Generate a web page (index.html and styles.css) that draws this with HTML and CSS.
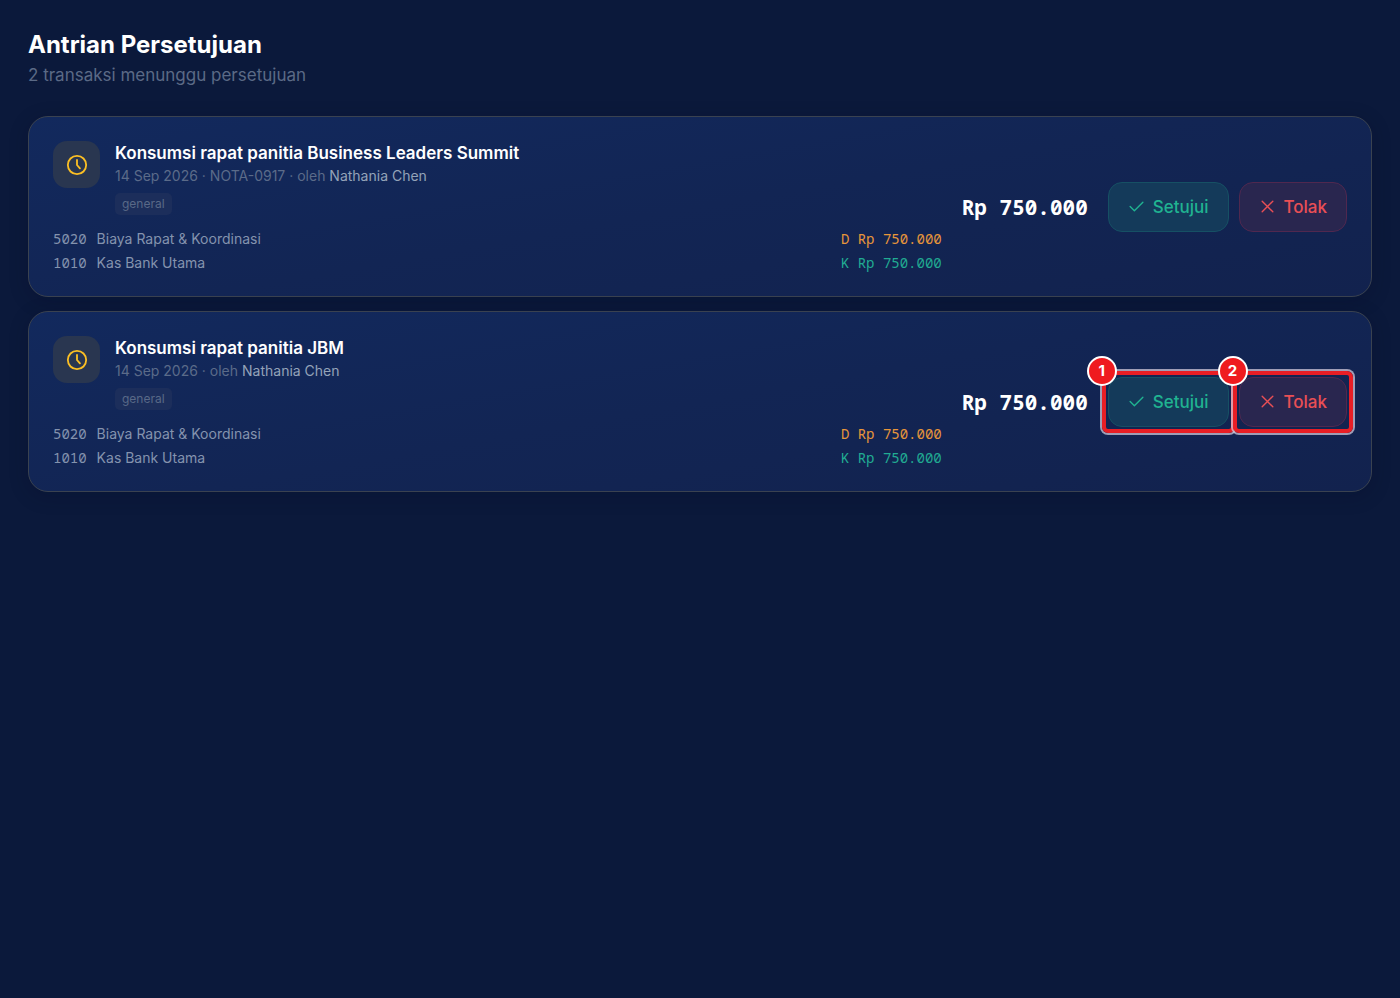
FILE: index.html
```html
<!DOCTYPE html>
<html lang="id">
<head>
<meta charset="utf-8">
<meta name="viewport" content="width=device-width, initial-scale=1">
<title>Antrian Persetujuan</title>
<link rel="stylesheet" href="styles.css">
</head>
<body>
<svg class="sprite" aria-hidden="true">
  <symbol id="clock" viewBox="0 0 24 24"><circle cx="12" cy="12" r="10"/><path d="M12 6.5V12l3.2 3.6"/></symbol>
  <symbol id="check" viewBox="0 0 16 16"><path d="M2 8l4 4 8-8"/></symbol>
  <symbol id="cross" viewBox="0 0 16 16"><path d="M3 3l10 10M13 3L3 13"/></symbol>
</svg>
<main class="page">
  <header class="page-header">
    <h1 class="page-title">Antrian Persetujuan</h1>
    <p class="page-subtitle">2 transaksi menunggu persetujuan</p>
  </header>

  <article class="card">
    <div class="details">
      <div class="summary">
        <span class="badge-icon"><svg><use href="#clock"/></svg></span>
        <div class="summary-text">
          <h2 class="card-title">Konsumsi rapat panitia Business Leaders Summit</h2>
          <p class="meta">14 Sep 2026 · NOTA-0917 · oleh <span class="author">Nathania Chen</span></p>
          <span class="tag">general</span>
        </div>
      </div>
      <ul class="entries">
        <li class="entry"><span class="code">5020</span><span>Biaya Rapat &amp; Koordinasi</span><span class="value debit">D Rp 750.000</span></li>
        <li class="entry"><span class="code">1010</span><span>Kas Bank Utama</span><span class="value credit">K Rp 750.000</span></li>
      </ul>
    </div>
    <strong class="amount">Rp 750.000</strong>
    <div class="actions">
      <div class="action"><button class="btn approve" type="button"><svg><use href="#check"/></svg>Setujui</button></div>
      <div class="action"><button class="btn reject" type="button"><svg><use href="#cross"/></svg>Tolak</button></div>
    </div>
  </article>

  <article class="card">
    <div class="details">
      <div class="summary">
        <span class="badge-icon"><svg><use href="#clock"/></svg></span>
        <div class="summary-text">
          <h2 class="card-title">Konsumsi rapat panitia JBM</h2>
          <p class="meta">14 Sep 2026 · oleh <span class="author">Nathania Chen</span></p>
          <span class="tag">general</span>
        </div>
      </div>
      <ul class="entries">
        <li class="entry"><span class="code">5020</span><span>Biaya Rapat &amp; Koordinasi</span><span class="value debit">D Rp 750.000</span></li>
        <li class="entry"><span class="code">1010</span><span>Kas Bank Utama</span><span class="value credit">K Rp 750.000</span></li>
      </ul>
    </div>
    <strong class="amount">Rp 750.000</strong>
    <div class="actions">
      <div class="action"><button class="btn approve" type="button"><svg><use href="#check"/></svg>Setujui</button><span class="marker"></span><span class="marker-number">1</span></div>
      <div class="action"><button class="btn reject" type="button"><svg><use href="#cross"/></svg>Tolak</button><span class="marker"></span><span class="marker-number">2</span></div>
    </div>
  </article>
</main>
</body>
</html>
```
FILE: styles.css
```css
* { box-sizing: border-box; }
body {
  margin: 0;
  min-height: 100vh;
  background: #0b193b;
  color: #fff;
  font-family: Inter, "Liberation Sans", sans-serif;
}
h1, h2, p, ul { margin: 0; padding: 0; }
ul { list-style: none; }
.sprite { display: none; }
svg { fill: none; stroke: currentColor; stroke-linecap: round; stroke-linejoin: round; }

.page { display: flex; flex-direction: column; gap: 14px; padding: 28px; }
.page-header { margin-bottom: 14px; }
.page-title { font-size: 24px; line-height: 34px; font-weight: 700; }
.page-subtitle { font-size: 17px; line-height: 26px; color: #5b6a86; }

.card {
  display: flex;
  align-items: center;
  gap: 20px;
  padding: 24px;
  border: 1px solid #3a4250;
  border-radius: 20px;
  background: linear-gradient(170deg, #12295d 0%, #122554 50%, #12224e 100%);
  box-shadow: 0 4px 20px rgba(4, 10, 34, 0.2);
}
.details { flex: 1; min-width: 0; }
.summary { display: flex; gap: 15px; }
.badge-icon {
  display: grid;
  place-items: center;
  flex: none;
  width: 47px;
  height: 47px;
  border-radius: 14px;
  background: #293650;
  color: #fbbf24;
}
.badge-icon svg { width: 22px; height: 22px; stroke-width: 2; }
.card-title { font-size: 17px; line-height: 24px; font-weight: 600; }
.meta { font-size: 14px; line-height: 22px; color: #5b6b89; }
.author { color: #94a3b8; }
.tag {
  display: block;
  width: fit-content;
  margin-top: 6px;
  padding: 0 7px;
  border-radius: 5px;
  background: #1c2e5b;
  color: #596987;
  font-size: 12px;
  line-height: 22px;
}
.entries {
  display: flex;
  flex-direction: column;
  gap: 6px;
  margin-top: 15px;
  color: #8493ae;
  font-size: 14px;
  line-height: 18px;
}
.entry { display: flex; gap: 10px; }
.code, .value, .amount { font-family: "Noto Sans Mono", "DejaVu Sans Mono", monospace; }
.value { margin-left: auto; }
.debit { color: #e8963a; }
.credit { color: #21ab92; }
.amount { font-size: 21px; line-height: 30px; font-weight: 700; }

.actions { display: flex; gap: 10px; }
.action { position: relative; }
.btn {
  display: flex;
  align-items: center;
  gap: 8px;
  height: 50px;
  padding: 0 19px;
  border: 1px solid;
  border-radius: 14px;
  font: 500 17px/24px Inter, "Liberation Sans", sans-serif;
}
.btn svg { width: 17px; height: 17px; stroke-width: 1.3; }
.approve { background: #143a5a; border-color: #165064; color: #20b391; }
.reject { background: #29264f; border-color: #50284f; color: #e94f55; }

.marker {
  position: absolute;
  inset: -6px;
  border: 4px solid #e81e25;
  border-radius: 6px;
  box-shadow: 0 0 0 2px rgba(220, 210, 225, 0.7);
}
.marker-number {
  position: absolute;
  z-index: 1;
  top: -21px;
  left: -21px;
  width: 30px;
  height: 30px;
  border: 2px solid #fff;
  border-radius: 50%;
  background: #ef1b1f;
  font-size: 15px;
  line-height: 26px;
  font-weight: 700;
  text-align: center;
}
```
